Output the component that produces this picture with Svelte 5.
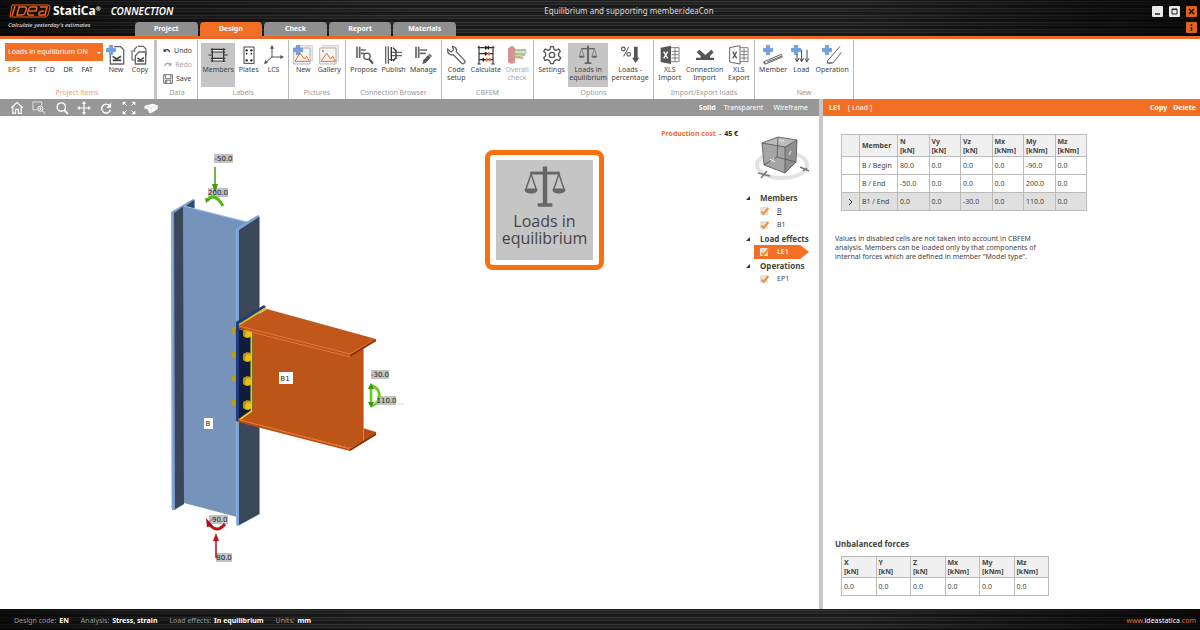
<!--
  Connection designer: ribbon, 3D scene with the member tree, and the load effect panel.
-->
<script>
  // ─── Icons (60 x 60 grid) ───────────────────────────────────────────────────

  const PLUS = '<path d="M10 1h10v9h9v10h-9v9H10v-9H1V10h9z" fill="#74a3dc" stroke="#4c80c4" stroke-width="1.5"/>'
  const BRACE = '<g stroke="#666" stroke-width="5"><path d="M9 5v34M17 5v34"/></g>'
  const XLS_SHEET = '<path d="M33 8h24v42H33M35 19h20M35 29h20M35 39h20M45 10v38" fill="none" stroke="#666" stroke-width="2.5"/>'

  const ICONS = {
    newItem: `<path d="M24 5h20l9 9v43H13V29" fill="none" stroke="#666" stroke-width="4"/><path d="M20 34l12 8 13-8M20 46h26" fill="none" stroke="#444" stroke-width="5"/>${PLUS}`,
    copyItem: '<path d="M24 4h16l8 8v20M14 20V12L22 4M14 18H6v27h10" fill="none" stroke="#666" stroke-width="3.5"/><path d="M27 21h20v36H16V32z" fill="#fff" stroke="#666" stroke-width="4"/><path d="M22 38l9 7 11-7M22 48h20" fill="none" stroke="#444" stroke-width="4"/>',
    members: '<path d="M8 13h44M8 21h44M8 40h44M8 48h44M13 10v14M47 10v14M13 37v14M47 37v14M13 24v14M47 24v14M1 30h12M47 30h12" stroke="#333" stroke-width="3.5" fill="none"/><path d="M15 15h30v4H15zM15 42h30v4H15z" fill="#eee"/>',
    plates: '<rect x="15" y="6" width="30" height="49" fill="none" stroke="#444" stroke-width="3"/><g fill="#222"><circle cx="23" cy="16" r="3.5"/><circle cx="37" cy="16" r="3.5"/><circle cx="23" cy="26" r="2.5"/><circle cx="37" cy="26" r="2.5"/><circle cx="23" cy="46" r="3.5"/><circle cx="37" cy="46" r="3.5"/></g>',
    lcs: '<path d="M24 8v28h30M24 36L6 52" fill="none" stroke="#555" stroke-width="3"/><path d="M24 0l-6 11h12zM60 36l-11-6v12zM0 58l4-13 8 8z" fill="#555"/>',
    picture: `<path d="M10 2h48v46H10z" fill="#eee" stroke="#bbb" stroke-width="2"/><path d="M2 9h49v48H2z" fill="#f4f4f4" stroke="#999" stroke-width="2"/><path d="M6 49l15-25 13 18 7-8 8 15z" fill="none" stroke="#ee6b25" stroke-width="3"/>${PLUS}`,
    gallery: '<path d="M10 2h48v46H10z" fill="#eee" stroke="#bbb" stroke-width="2"/><path d="M2 9h49v48H2z" fill="#f4f4f4" stroke="#999" stroke-width="2"/><path d="M6 49l17-24 12 17 6-8 8 15z" fill="none" stroke="#ee6b25" stroke-width="3"/><circle cx="12" cy="18" r="3" fill="#ee6b25"/>',
    propose: `${BRACE}<path d="M20 15h15M20 25h10" stroke="#666" stroke-width="5"/><circle cx="39" cy="34" r="9.5" fill="none" stroke="#555" stroke-width="4"/><path d="M45 42l12 14" stroke="#555" stroke-width="6"/>`,
    publish: '<path d="M5 4v52M13 4v52M20 22h34M20 32h34M13 44h20" stroke="#666" stroke-width="4"/><path d="M22 6v42M27 8l8 9M27 48l8-9M36 14v28" stroke="#333" stroke-width="4"/>',
    manage: `${BRACE}<path d="M20 15h22M20 25h18" stroke="#666" stroke-width="5"/><path d="M28 57l3-11 18-20 8 7-18 20z" fill="#555"/><path d="M45 29l9 8" stroke="#fff" stroke-width="2"/>`,
    wrench: '<path d="M19 4c8 0 15 8 12 16l25 27c4 5-4 12-9 8L22 29C12 32 3 24 5 13l10 8 8-7z" fill="none" stroke="#666" stroke-width="4"/>',
    calculate: '<path d="M9 2v56M51 2v56M5 8h50M9 26h42M9 44h42M4 57h10M46 57h10" stroke="#333" stroke-width="3.5"/><g fill="#222"><ellipse cx="29" cy="8" rx="3" ry="6"/><ellipse cx="37" cy="8" rx="3" ry="6"/><ellipse cx="29" cy="26" rx="3" ry="6"/><ellipse cx="22" cy="44" rx="3" ry="6"/></g><g fill="#ee6b25"><ellipse cx="39" cy="26" rx="3" ry="6"/><ellipse cx="32" cy="44" rx="3" ry="6"/><ellipse cx="41" cy="44" rx="3" ry="6"/></g>',
    overall: '<path d="M3 10l11-7 9 6v44l-9 4-11-5z" fill="#d07878"/><path d="M14 3l9 6v44" fill="none" stroke="#a85c5c" stroke-width="2"/><path d="M23 13l33-2 3 12-6 10-30-2z" fill="#98b47c"/><path d="M25 18l31 1v6l-31-1z" fill="#cfdcbd"/><path d="M23 31l28 4-4 8-24-4z" fill="#c0a070"/>',
    gear: '<path d="M26 5h8l2 8 6 3 8-4 5 7-5 6v8l6 5-4 8-9-2-6 4-3 8h-8l-3-8-6-4-8 2-4-8 6-5v-8l-6-6 5-7 8 4 6-3z" fill="none" stroke="#555" stroke-width="4" stroke-linejoin="round"/><circle cx="30" cy="30" r="8" fill="none" stroke="#555" stroke-width="4"/>',
    scales: '<path d="M27 2h6v50h7v5H20v-5h7z" fill="#666"/><path d="M10 9h40v4H10z" fill="#666"/><path d="M11 12L4 33h14zM49 12l-7 21h14z" fill="none" stroke="#666" stroke-width="2"/><path d="M2 33h18c0 8-18 8-18 0zM40 33h18c0 8-18 8-18 0z" fill="#666"/>',
    percent: '<circle cx="10" cy="12" r="5.5" fill="none" stroke="#555" stroke-width="3.5"/><circle cx="26" cy="28" r="5.5" fill="none" stroke="#555" stroke-width="3.5"/><path d="M26 6L11 34" stroke="#555" stroke-width="3"/><path d="M42 5h11v33h5L47 54 36 38h6z" fill="#555"/>',
    xlsImport: `${XLS_SHEET}<path d="M2 8l31-6v55L2 51z" fill="#555"/><path d="M11 20l12 20M23 20L11 40" stroke="#fff" stroke-width="4"/>`,
    xlsExport: `${XLS_SHEET}<path d="M2 8l31-6v55L2 51z" fill="#fff" stroke="#666" stroke-width="3"/><path d="M11 20l12 20M23 20L11 40" stroke="#555" stroke-width="4"/>`,
    connection: '<path d="M3 45h54v-7H45v-5l11-11-7-8-18 16-18-16-8 8 12 11v5H3z" fill="#555"/>',
    member: `<path d="M3 50l52-22 3 8L8 57zM3 50v6M8 57l-5-1M12 51l42-17" fill="none" stroke="#444" stroke-width="2.5"/>${PLUS}`,
    load: `<path d="M18 24v24M32 14v34M48 14v34" stroke="#444" stroke-width="3"/><path d="M12 40l6 10 6-10M26 40l6 10 6-10M42 40l6 10 6-10" fill="none" stroke="#444" stroke-width="3"/>${PLUS}`,
    operation: `<path d="M54 4L16 48v6h14M58 22L33 54H16" fill="none" stroke="#666" stroke-width="3"/>${PLUS}`,
    undo: '<path d="M4 12v23h23l-8-8c9-7 21-3 27 12h8C50 15 27 8 12 20z" fill="#333"/>',
    redo: '<path d="M56 12v23H33l8-8c-9-7-21-3-27 12H6C10 15 33 8 48 20z" fill="#aaa"/>',
    save: '<path d="M4 4h52v52H4zM14 4v24h33V4M14 56V37h32v19M22 40v12" fill="none" stroke="#555" stroke-width="5"/>',
  }

  const VIEW_TOOLS = [
    { name: 'Home', art: '<path d="M5 29L30 7l25 22M12 25v28h12V36h12v17h12V25" fill="none" stroke="#fff" stroke-width="5"/>' },
    { name: 'Zoom window', art: '<path d="M22 38H4V4h38v15" fill="none" stroke="#fff" stroke-width="3"/><circle cx="36" cy="33" r="11" fill="none" stroke="#fff" stroke-width="4"/><path d="M44 42l12 13M31 33h10M36 28v10" stroke="#fff" stroke-width="4"/>' },
    { name: 'Zoom', art: '<circle cx="27" cy="26" r="18" fill="none" stroke="#fff" stroke-width="6"/><path d="M40 39l15 16" stroke="#fff" stroke-width="8"/>' },
    { name: 'Pan', art: '<path d="M30 6v48M6 30h48" stroke="#fff" stroke-width="5"/><path d="M30 0l9 13H21zM30 60l9-13H21zM0 30l13-9v18zM60 30l-13-9v18z" fill="#fff"/>' },
    { name: 'Rotate', art: '<path d="M45 20a19 19 0 1 0 4 17" fill="none" stroke="#fff" stroke-width="6"/><path d="M52 8v21H31z" fill="#fff"/>' },
    { name: 'Fit', art: '<path d="M3 3h16L3 19zM57 3v16L41 3zM3 57V41l16 16zM57 57H41l16-16z" fill="#fff"/><path d="M8 8l12 12M52 8L40 20M8 52l12-12M52 52L40 40" stroke="#fff" stroke-width="4"/>' },
    { name: 'Solid view', art: '<path d="M2 20l34-8 23 6v16L30 52l-9-2-4-14-15-4z" fill="#fff"/><path d="M4 21l26 8 28-10M30 29v21" fill="none" stroke="#bbb" stroke-width="2"/>' },
  ]

  // ─── Ribbon ─────────────────────────────────────────────────────────────────

  const TABS = ['Project', 'Design', 'Check', 'Report', 'Materials']
  const CODES = ['EPS', 'ST', 'CD', 'DR', 'FAT']

  const GROUPS = [
    { title: 'Labels', width: 91, tools: [
      { label: 'Members', icon: 'members', on: true },
      { label: 'Plates', icon: 'plates' },
      { label: 'LCS', icon: 'lcs' },
    ] },
    { title: 'Pictures', width: 57, tools: [
      { label: 'New', icon: 'picture' },
      { label: 'Gallery', icon: 'gallery' },
    ] },
    { title: 'Connection Browser', width: 96, tools: [
      { label: 'Propose', icon: 'propose' },
      { label: 'Publish', icon: 'publish' },
      { label: 'Manage', icon: 'manage' },
    ] },
    { title: 'CBFEM', width: 92, tools: [
      { label: 'Code setup', icon: 'wrench' },
      { label: 'Calculate', icon: 'calculate' },
      { label: 'Overall check', icon: 'overall', off: true },
    ] },
    { title: 'Options', width: 120, tools: [
      { label: 'Settings', icon: 'gear' },
      { label: 'Loads in equilibrium', icon: 'scales', on: true },
      { label: 'Loads - percentage', icon: 'percent' },
    ] },
    { title: 'Import/Export loads', width: 101, tools: [
      { label: 'XLS Import', icon: 'xlsImport' },
      { label: 'Connection Import', icon: 'connection' },
      { label: 'XLS Export', icon: 'xlsExport' },
    ] },
    { title: 'New', width: 99, tools: [
      { label: 'Member', icon: 'member' },
      { label: 'Load', icon: 'load' },
      { label: 'Operation', icon: 'operation' },
    ] },
  ]

  // ─── Project data ───────────────────────────────────────────────────────────

  const TREE = [
    { title: 'Members', items: ['B', 'B1'] },
    { title: 'Load effects', items: ['LE1'] },
    { title: 'Operations', items: ['EP1'] },
  ]

  const FORCES = [['N', 'kN'], ['Vy', 'kN'], ['Vz', 'kN'], ['Mx', 'kNm'], ['My', 'kNm'], ['Mz', 'kNm']]
  const LOADS = [
    { member: 'B / Begin', values: ['80.0', '0.0', '0.0', '0.0', '-90.0', '0.0'] },
    { member: 'B / End', values: ['-50.0', '0.0', '0.0', '0.0', '200.0', '0.0'] },
    { member: 'B1 / End', values: ['0.0', '0.0', '-30.0', '0.0', '110.0', '0.0'] },
  ]
  const UNBALANCED = [['X', 'kN'], ['Y', 'kN'], ['Z', 'kN'], ['Mx', 'kNm'], ['My', 'kNm'], ['Mz', 'kNm']]

  const STATUS = [
    ['Design code:', 'EN'],
    ['Analysis:', 'Stress, strain'],
    ['Load effects:', 'In equilibrium'],
    ['Units:', 'mm'],
  ]

  // Scene labels: x, y, width, text
  const TAGS = [
    [214, 154, 19, '-50.0'],
    [208, 188, 20, '200.0'],
    [209, 515, 19, '-90.0'],
    [216, 553, 16, '80.0'],
    [371, 370, 18, '-30.0'],
    [377, 396, 19, '110.0'],
  ]
  const BOLTS = [333, 357, 381, 405]

  let tab = $state('Design')
  let code = $state('EPS')
  let selectedRow = $state(2)
</script>

{#snippet icon(name)}
  <svg viewBox="0 0 60 60" aria-hidden="true">{@html ICONS[name]}</svg>
{/snippet}

{#snippet tool(t)}
  <button class="tool" class:on={t.on} disabled={t.off}>
    {@render icon(t.icon)}
    <span>{t.label}</span>
  </button>
{/snippet}

<div class="app">
  <header>
    <div class="title-row">
      <div class="logo">
        <svg class="idea" viewBox="0 0 42 14" role="img" aria-label="IDEA">
          <path d="M3 1h36q3 0 2 3l-2 7q-1 2-3 2H1z" fill="#1a0e08" stroke="#e8641f" />
          <g fill="none" stroke="#e8641f" stroke-width="1.5">
            <path d="M6 2L3 12M10 3h6q2 0 1 3l-1 3q-1 2-3 2H8zM28 3h-6q-2 0-3 4t1 4h5M20 7h7l1-4M31 3h7l-2 8h-6q-1-4 5-4" />
          </g>
        </svg>
        <b>StatiCa<sup>®</sup></b>
        <i>CONNECTION</i>
      </div>
      <h1>Equilibrium and supporting member.ideaCon</h1>
      <div class="window-buttons">
        <button aria-label="Minimize"><svg viewBox="0 0 11 11"><path d="M3 8h5" stroke="#222" stroke-width="1.5" /></svg></button>
        <button aria-label="Maximize"><svg viewBox="0 0 11 11"><path d="M3 3h5v5H3zM3 3.5h5" fill="none" stroke="#222" /></svg></button>
        <button class="hot" aria-label="Close"><svg viewBox="0 0 11 11"><path d="M3 3l5 5M8 3L3 8" stroke="#111" stroke-width="1.5" /></svg></button>
      </div>
    </div>
    <div class="tab-row">
      <em>Calculate yesterday's estimates</em>
      <nav class="tabs">
        {#each TABS as t}
          <button class:active={tab === t} onclick={() => (tab = t)}>{t}</button>
        {/each}
      </nav>
      <div class="window-buttons">
        <button class="hot" aria-label="Info"><svg viewBox="0 0 11 11"><path d="M5.5 2v2M5.5 5v4" stroke="#222" stroke-width="1.5" /></svg></button>
      </div>
    </div>
  </header>

  <section class="ribbon">
    <div class="group items">
      <div class="tools">
        <div class="picker">
          <div class="drop">
            <select aria-label="Project item"><option>Loads in equilibrium ON</option></select>
          </div>
          <div class="codes">
            {#each CODES as c}
              <button class:chosen={code === c} onclick={() => (code = c)}>{c}</button>
            {/each}
          </div>
        </div>
        {@render tool({ label: 'New', icon: 'newItem' })}
        {@render tool({ label: 'Copy', icon: 'copyItem' })}
      </div>
      <h2>Project items</h2>
    </div>
    <div class="group data">
      <div class="stack">
        <button>{@render icon('undo')}Undo</button>
        <button disabled>{@render icon('redo')}Redo</button>
        <button>{@render icon('save')}Save</button>
      </div>
      <h2>Data</h2>
    </div>
    {#each GROUPS as g}
      <div class="group" style="width:{g.width}px">
        <div class="tools">
          {#each g.tools as t}{@render tool(t)}{/each}
        </div>
        <h2>{g.title}</h2>
      </div>
    {/each}
  </section>

  <main>
    <section class="viewer">
      <div class="bar view-bar">
        <div class="view-tools">
          {#each VIEW_TOOLS as v}
            <button aria-label={v.name}><svg viewBox="0 0 60 60">{@html v.art}</svg></button>
          {/each}
        </div>
        <div class="modes">
          <button class="active">Solid</button>
          <button>Transparent</button>
          <button>Wireframe</button>
        </div>
      </div>

      <div class="canvas">
        <svg class="scene" viewBox="0 116 819 493" preserveAspectRatio="xMinYMin meet">
          <!-- column -->
          <path d="M171 212L193 199L195 200V210L184 214V504L175 510H172z" fill="#7a9ccb" />
          <path d="M186 206L194 200V211z" fill="#39475c" />
          <path d="M174 213L184 206V504L175 509z" fill="#394759" />
          <path d="M183 206L248 222L237 229V517L184 503z" fill="#7593bb" />
          <path d="M184 206L247 222" stroke="#9fc3ef" />
          <path d="M236 228L258 215L260 217V514L238 526L236 525z" fill="#7da3d5" />
          <path d="M239 230L259 217V514L239 525z" fill="#394759" />
          <path d="M172 212V508M236.5 229V525" stroke="#8eb2e0" />
          <!-- end plate and welds -->
          <path d="M236 322L264 305L266 307L239 325V422L236 421z" fill="#1f3c7c" />
          <path d="M239 325L253 329V411L239 420z" fill="#101c3e" />
          <path d="M239 325L266 308" stroke="#e0b913" stroke-width="2" />
          {#each BOLTS as y}
            <path d="M232 {y - 5}l1-1h2v7h-2l-1-2z" fill="#c09c10" />
            <path d="M243 {y - 3}l4-2 4 1v8l-5 1-3-2z" fill="#b8960c" />
            <path d="M246 {y - 2}l3-1 2 2v4l-3 2-3-2z" fill="#e6c116" />
          {/each}
          <!-- beam -->
          <path d="M253 329L350 356L363 347V442L350 448L240 420L253 411z" fill="#bd5519" />
          <path d="M251.5 331V411L239 420" fill="none" stroke="#f3c51b" stroke-width="2" />
          <path d="M363 428L376 432V435L350 451L238 422V419L350 448L363 441z" fill="#b94e14" />
          <path d="M239 326L267 309L376 339V341L350 357L239 328z" fill="#c1571b" />
          <path d="M239 326L350 354L376 339M350 354V357M239 329L350 357" fill="none" stroke="#ee7a3d" stroke-width="0.8" />
          <path d="M363.5 348V442L350 449L240 420" fill="none" stroke="#ff7d35" stroke-width="0.9" />
          <path d="M350 356L376 340M350 450L376 434" stroke="#843205" stroke-width="1.5" />
          <!-- loads -->
          {#each TAGS as [x, y, w]}
            <rect {x} {y} width={w} height="9" fill="#c3c3c3" />
          {/each}
          <path d="M215 167V188" stroke="#459a12" stroke-width="1.5" />
          <path d="M212 184h6l-3 9z" fill="#459a12" />
          <path d="M207 201Q214 191 223 206" fill="none" stroke="#55bd12" stroke-width="3" />
          <path d="M205 198l5 1-4 4z" fill="#459a12" />
          <path d="M208 522Q216 535 225 524" fill="none" stroke="#c01018" stroke-width="3" />
          <path d="M206 518l1 9 6-1z" fill="#a80e14" />
          <path d="M216 540V558" stroke="#a80e14" stroke-width="1.5" />
          <path d="M213 541l3-8 3 8z" fill="#c01018" />
          <path d="M371 385V405M371 385Q381 389 379 398Q377 405 371 406" fill="none" stroke="#63ce16" stroke-width="2.5" />
          <path d="M368 389l3-6 3 6zM368 402h6l-3 6z" fill="#3f9414" />
          <path d="M398 404h6" stroke="#ccd8e8" />
          {#each TAGS as [x, y, w, text]}
            <text x={x + w / 2} y={y + 7}>{text}</text>
          {/each}
          <path d="M279 372h14v12h-14zM204 418h9v11h-9z" fill="#fff" />
          <text x="285" y="381">B1</text>
          <text x="208" y="426">B</text>
        </svg>

        <div class="callout">
          <button>
            {@render icon('scales')}
            <span>Loads in equilibrium</span>
          </button>
        </div>

        <p class="cost"><b>Production cost</b><span>-</span><strong>45 €</strong></p>
        <aside>
          <svg class="cube" viewBox="0 0 56 48" aria-hidden="true">
            <ellipse cx="28" cy="30" rx="25" ry="13" fill="none" stroke="#e2e2e2" stroke-width="4" />
            <path d="M8 8L24 2L43 5L42 27L31 38L10 30z" fill="#a5a5a5" />
            <path d="M8 8L31 12L43 5L24 2z" fill="#bcbcbc" />
            <path d="M31 12L43 5L42 27L31 38z" fill="#8f8f8f" />
            <path d="M8 8L24 2L43 5L42 27L31 38L10 30zM8 8L31 12L43 5M31 12V38M24 2L23 22L10 30M23 22L42 27" fill="none" stroke="#555" stroke-width="0.8" />
            <path d="M16 24l5 3M17 27l3-4M25 6h5M35 20l2-4" stroke="#eee" />
            <path d="M4 38l12 3M7 43l6-7M46 32l9 4M49 36l4-3" stroke="#777" stroke-width="1.5" />
          </svg>
          {#each TREE as branch}
            <h3>{branch.title}</h3>
            {#each branch.items as item}
              <label class:active={item === 'LE1'}>
                <input type="checkbox" checked />
                <svg viewBox="0 0 9 9" aria-hidden="true"><path d="M1.5 4.5l2 2.500 5-6" /></svg>
                <span class:current={item === 'B'}>{item}</span>
              </label>
            {/each}
          {/each}
        </aside>
      </div>
    </section>

    <section class="panel">
      <div class="bar panel-bar">
        <b>LE1</b><span>[ Load ]</span>
        <button>Copy</button>
        <button>Delete</button>
      </div>
      <div class="panel-body">
        <table class="loads">
          <thead>
            <tr>
              <th class="mark"></th>
              <th class="member">Member</th>
              {#each FORCES as [name, unit]}<th>{name}<br />[{unit}]</th>{/each}
            </tr>
          </thead>
          <tbody>
            {#each LOADS as row, i}
              <tr class:selected={selectedRow === i} onclick={() => (selectedRow = i)}>
                <td class="mark">
                  {#if selectedRow === i}<svg viewBox="0 0 6 8"><path d="M1 1l3 3-3 3" fill="none" stroke="#333" /></svg>{/if}
                </td>
                <td>{row.member}</td>
                {#each row.values as v}<td>{v}</td>{/each}
              </tr>
            {/each}
          </tbody>
        </table>
        <p>Values in disabled cells are not taken into account in CBFEM analysis. Members can be loaded only by that components of internal forces which are defined in member "Model type".</p>

        <h3>Unbalanced forces</h3>
        <table class="unbalanced">
          <thead>
            <tr>{#each UNBALANCED as [name, unit]}<th>{name}<br />[{unit}]</th>{/each}</tr>
          </thead>
          <tbody>
            <tr>{#each UNBALANCED as _}<td>0.0</td>{/each}</tr>
          </tbody>
        </table>
      </div>
    </section>
  </main>

  <footer>
    {#each STATUS as [name, value]}
      <span>{name} <b>{value}</b></span>
    {/each}
    <a href="#site">www.<i>ideastatica</i>.com</a>
  </footer>
</div>

<style>
  :global(body) { background: #fff; }

  .app {
    --orange: #f26f25;
    --bar: #979797;
    display: flex;
    flex-direction: column;
    min-height: 100vh;
    font: 7px/8px "Noto Sans", "Open Sans", sans-serif;
    color: #444;
  }
  button, select { font: inherit; color: inherit; background: none; border: 0; padding: 0; margin: 0; }
  h1, h2, h3, p { margin: 0; font: inherit; }
  svg { display: block; }

  /* Header */
  header, footer {
    background:
      linear-gradient(90deg, rgba(0,0,0,.7), rgba(0,0,0,.3) 12%, transparent 35%, transparent 70%, rgba(0,0,0,.75)),
      repeating-linear-gradient(#1c1c1c 0 1px, #383838 1px 2px, #222 2px 4px, #303030 4px 5px, #191919 5px 7px);
  }
  header { border-bottom: 3px solid #e8692a; }
  .title-row { display: flex; height: 22px; align-items: center; }
  .logo { display: flex; flex: 0 0 181px; align-items: center; padding-left: 9px; color: #fff; }
  .idea { width: 42px; height: 14px; }
  .logo b { margin-left: 2px; font-size: 12px; line-height: 14px; }
  .logo sup { font-size: 6px; line-height: 6px; vertical-align: 4px; }
  .logo i { margin-left: 10px; font-size: 10px; font-weight: 600; line-height: 14px; }
  h1 { flex: 1; text-align: center; color: #ddd; font-size: 8px; line-height: 12px; }
  .window-buttons { display: flex; gap: 6px; justify-content: flex-end; width: 129px; padding-right: 3px; }
  .window-buttons button { width: 11px; height: 11px; background: #e8e8e8; border-radius: 1px; }
  .window-buttons .hot { background: #dc6420; }
  .tab-row { display: flex; height: 14px; }
  .tab-row em { flex: 0 0 127px; padding-left: 8px; color: #eee; font-size: 6px; line-height: 6px; }
  .tab-row .window-buttons { margin-left: auto; }
  .tabs { display: grid; grid-template-columns: repeat(5, 1fr); gap: 2px; width: 321px; }
  .tabs button {
    background: #8f8f8f;
    color: #fff;
    font-weight: 700;
    border-radius: 4px 4px 0 0;
  }
  .tabs .active { background: var(--orange); }

  /* Ribbon */
  .ribbon { display: flex; height: 60px; }
  .group {
    box-sizing: border-box;
    display: flex;
    flex-direction: column;
    justify-content: space-between;
    margin-top: 1px;
    padding: 3px 2px 2px;
    border-right: 1px solid #bbb;
  }
  .group h2 { color: #999; text-align: center; }
  .items { width: 157px; border-right: 3px solid #c4c4c4; }
  .items h2 { color: #f0a075; }
  .items .picker { width: 98px; padding-left: 2px; }
  .drop { position: relative; background: var(--orange); color: #fff; }
  .drop::after {
    content: '';
    position: absolute;
    right: 2px;
    top: 9px;
    border: 2px solid transparent;
    border-top-color: #fff;
    pointer-events: none;
  }
  .drop select { appearance: none; display: block; width: 100%; height: 18px; padding: 0 3px; }
  .codes { display: flex; justify-content: space-between; padding: 5px 10px 0 3px; color: #333; }
  .codes .chosen { color: var(--orange); font-weight: 700; }
  .tools { display: flex; justify-content: space-around; }
  .tool {
    display: flex;
    flex-direction: column;
    align-items: center;
    min-width: 22px;
    height: 44px;
    padding: 2px 1px;
    box-sizing: border-box;
  }
  .tool svg { width: 20px; height: 20px; }
  .tool span { width: min-content; margin-top: 1px; }
  .tool.on { background: #c5c5c5; }
  .tool:disabled, .stack button:disabled { color: #aaa; }
  .tool:disabled svg { opacity: .8; }
  .data { width: 41px; }
  .stack { display: flex; flex-direction: column; gap: 4px; padding: 3px 3px 0 4px; }
  .stack button { display: flex; align-items: center; gap: 3px; height: 10px; }
  .stack svg { width: 10px; height: 10px; }

  /* Main area */
  main { flex: 1; display: grid; grid-template-columns: 1fr 381px; }
  .viewer { display: flex; flex-direction: column; }
  .bar { display: flex; align-items: center; height: 17px; color: #fff; }
  .view-bar { justify-content: space-between; background: var(--bar); }
  .view-tools { display: flex; justify-content: space-between; width: 148px; margin-left: 10px; }
  .view-tools svg { width: 14px; height: 14px; }
  .modes { display: flex; gap: 8px; padding-right: 11px; }
  .modes button:last-child { margin-left: 2px; }
  .modes .active { font-weight: 700; }

  .canvas {
    position: relative;
    flex: 1;
    display: flex;
    justify-content: flex-end;
    align-items: flex-start;
  }
  .scene { position: absolute; inset: 0; width: 100%; height: 100%; }
  .scene text { font: 7px "DejaVu Sans", sans-serif; text-anchor: middle; fill: #222; }
  .callout {
    position: absolute;
    left: 485px;
    top: 34px;
    padding: 5px 6px;
    border: 5px solid #fb6f0c;
    border-radius: 8px;
    background: #fff;
  }
  .callout button {
    display: flex;
    flex-direction: column;
    align-items: center;
    width: 97px;
    height: 100px;
    padding-top: 5px;
    background: #c5c5c5;
    font: 16px/17px "Open Sans", sans-serif;
  }
  .callout svg { width: 44px; height: 44px; }
  .callout span { width: min-content; margin-top: 4px; }
  .cost { display: flex; gap: 3px; position: relative; margin: 14px 7px 0 0; color: #222; }
  .cost b { color: var(--orange); }

  aside { position: relative; width: 74px; padding-top: 19px; }
  .cube { width: 56px; height: 48px; margin: 0 0 8px 9px; }
  aside h3, .panel h3 { font-size: 8px; font-weight: 700; }
  aside h3 { position: relative; padding-left: 15px; line-height: 13px; }
  aside h3::before {
    content: '';
    position: absolute;
    left: 1px;
    top: 5px;
    border: 2px solid #333;
    border-top-color: transparent;
    border-left-color: transparent;
  }
  label {
    display: flex;
    align-items: center;
    position: relative;
    height: 14px;
    padding-left: 15px;
  }
  label input { appearance: none; width: 8px; height: 8px; margin: 0; background: #e2e2e2; border-radius: 1px; }
  label svg { position: absolute; left: 15px; width: 9px; height: 9px; fill: none; stroke: #f59325; stroke-width: 2; pointer-events: none; }
  label span { margin-left: 9px; }
  label .current { text-decoration: underline; }
  label.active { color: #fff; font-weight: 600; }
  label.active::before {
    content: '';
    position: absolute;
    inset: 0 10px 0 9px;
    background: var(--orange);
    clip-path: polygon(0 0, 84% 0, 100% 50%, 84% 100%, 0 100%);
  }
  label.active input, label.active span { position: relative; }

  /* Load effect panel */
  .panel { display: flex; flex-direction: column; border-left: 4px solid #c8c8c8; }
  .panel-bar { padding: 0 4px 0 6px; background: var(--orange); }
  .panel-bar span { flex: 1; margin-left: 7px; }
  .panel-bar button { margin-left: 6px; font-weight: 700; }
  .panel-body { flex: 1; display: flex; flex-direction: column; align-items: flex-start; padding: 18px 12px 13px; }
  table { border-collapse: collapse; table-layout: fixed; margin-left: 6px; border: 1px solid #a5a5a5; }
  th, td { box-sizing: border-box; padding: 0 2px; border: 1px solid #bbb; text-align: left; white-space: nowrap; }
  th { height: 21px; background: #f0f0f0; font-weight: 700; line-height: 9px; }
  td { height: 18px; }
  .loads { width: 246px; }
  .loads th { height: 22px; }
  .loads .mark { width: 18px; }
  .loads .member { width: 38px; }
  .mark svg { width: 6px; height: 8px; margin: 0 auto; }
  .selected td { background: #e0e0e0; }
  .unbalanced { width: 208px; }
  .panel p { width: 210px; margin-top: 23px; line-height: 9px; }
  .panel h3 { margin: auto 0 6px; line-height: 12px; }

  footer { display: flex; align-items: center; gap: 12px; height: 21px; padding: 2px 4px 0 14px; box-sizing: border-box; color: #999; }
  footer b { margin-left: 1px; color: #fff; }
  footer a { margin-left: auto; color: #e8692a; text-decoration: none; }
  footer a i { color: #fff; font-style: normal; }
</style>
